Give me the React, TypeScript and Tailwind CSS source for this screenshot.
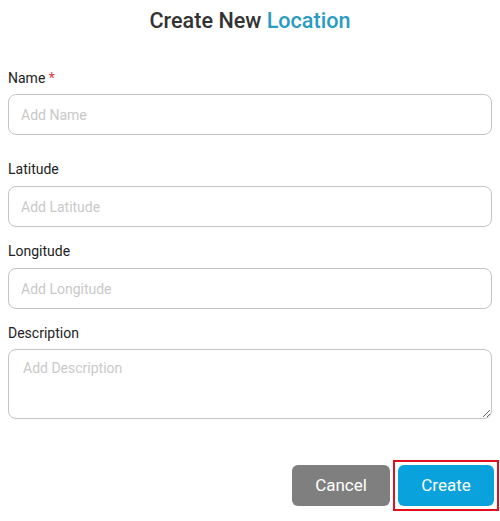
import React from 'react'

const fields = [
  { label: 'Latitude', placeholder: 'Add Latitude', gap: 'mt-[25px]' },
  { label: 'Longitude', placeholder: 'Add Longitude', gap: 'mt-[15px]' },
]

export default function App() {
  return (
    <div className="w-[500px] h-[521px] bg-white font-['Roboto',sans-serif] text-[#222]">
      <h1 className="pt-[8px] text-center text-[21.6px] leading-[26px] font-medium text-[#333]">
        Create New <span className="text-[#2a9cc0]">Location</span>
      </h1>

      <div className="px-[8px] pt-[35px]">
        <label className="block text-[14px] leading-[18px]">
          Name <span className="text-[#e53935]">*</span>
        </label>
        <input
          placeholder="Add Name"
          className="mt-[7px] w-full h-[41px] rounded-[8px] border border-[#c4c4c4] px-[12px] text-[14px] placeholder:text-[#c9c9c9] outline-none"
        />

        {fields.map((f) => (
          <div key={f.label} className={f.gap}>
            <label className="block text-[14px] leading-[18px]">{f.label}</label>
            <input
              placeholder={f.placeholder}
              className="mt-[8px] w-full h-[41px] rounded-[8px] border border-[#c4c4c4] px-[12px] text-[14px] placeholder:text-[#c9c9c9] outline-none"
            />
          </div>
        ))}

        <div className="mt-[15px]">
          <label className="block text-[14px] leading-[18px]">Description</label>
          <textarea
            placeholder="Add Description"
            className="mt-[7px] block w-full h-[70px] rounded-[8px] border border-[#c4c4c4] px-[14px] py-[8px] text-[14px] placeholder:text-[#c9c9c9] outline-none"
          />
        </div>

        <div className="mt-[41px] flex justify-end items-center gap-[3px] -mr-[7px]">
          <button className="w-[98px] h-[41px] rounded-[6px] bg-[#7f7f7f] text-white text-[17px]">
            Cancel
          </button>
          <div className="border-2 border-[#e0101c] p-[3px]">
            <button className="w-[96px] h-[41px] rounded-[6px] bg-[#0aa2dc] text-white text-[17px]">
              Create
            </button>
          </div>
        </div>
      </div>
    </div>
  )
}
